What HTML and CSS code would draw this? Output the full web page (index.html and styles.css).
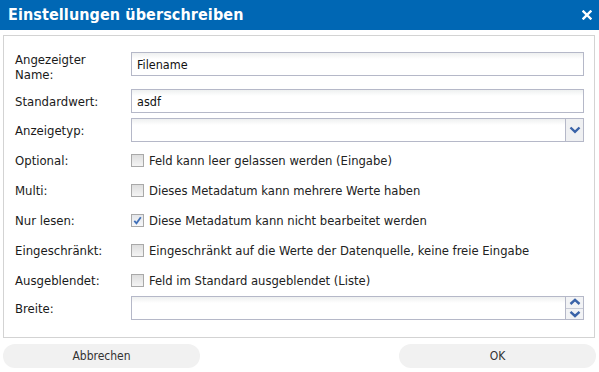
FILE: index.html
```html
<!DOCTYPE html>
<html lang="de">
<head>
<meta charset="utf-8">
<title>Einstellungen überschreiben</title>
<link rel="stylesheet" href="styles.css">
</head>
<body>
<div class="dialog">
  <div class="titlebar">
    <span class="title">Einstellungen überschreiben</span>
    <span class="close"><svg width="10" height="10" viewBox="0 0 10 10"><path d="M1.5 1.5 L8.5 8.5 M8.5 1.5 L1.5 8.5" stroke="#fff" stroke-width="2.4" stroke-linecap="square"/></svg></span>
  </div>
  <div class="panel">
    <div class="form">
      <div class="row row-name">
        <label class="lbl lbl-top">Angezeigter Name:</label>
        <div class="field"><span class="val">Filename</span></div>
      </div>
      <div class="row row-input">
        <label class="lbl">Standardwert:</label>
        <div class="field"><span class="val">asdf</span></div>
      </div>
      <div class="row row-input">
        <label class="lbl">Anzeigetyp:</label>
        <div class="field combo"><span class="val"></span>
          <span class="trigger"><svg width="12" height="8" viewBox="0 0 12 8"><path d="M1.5 1.5 L6 5.8 L10.5 1.5" stroke="#3a63a8" stroke-width="2.4" fill="none"/></svg></span>
        </div>
      </div>
      <div class="checks">
        <div class="row row-check">
          <label class="lbl">Optional:</label>
          <div class="check"><span class="box"></span><span class="ctext">Feld kann leer gelassen werden (Eingabe)</span></div>
        </div>
        <div class="row row-check">
          <label class="lbl">Multi:</label>
          <div class="check"><span class="box"></span><span class="ctext">Dieses Metadatum kann mehrere Werte haben</span></div>
        </div>
        <div class="row row-check">
          <label class="lbl">Nur lesen:</label>
          <div class="check"><span class="box checked"><svg width="11" height="11" viewBox="0 0 11 11"><path d="M2.3 5.8 L4.5 8.3 L8.8 2.2" stroke="#3f6fb8" stroke-width="1.8" fill="none"/></svg></span><span class="ctext">Diese Metadatum kann nicht bearbeitet werden</span></div>
        </div>
        <div class="row row-check">
          <label class="lbl">Eingeschränkt:</label>
          <div class="check"><span class="box"></span><span class="ctext">Eingeschränkt auf die Werte der Datenquelle, keine freie Eingabe</span></div>
        </div>
        <div class="row row-check">
          <label class="lbl">Ausgeblendet:</label>
          <div class="check"><span class="box"></span><span class="ctext">Feld im Standard ausgeblendet (Liste)</span></div>
        </div>
      </div>
      <div class="row row-input row-breite">
        <label class="lbl">Breite:</label>
        <div class="field combo"><span class="val"></span>
          <span class="spinner">
            <span class="spin"><svg width="12" height="8" viewBox="0 0 12 8"><path d="M1.5 6 L6 1.8 L10.5 6" stroke="#3a63a8" stroke-width="2.4" fill="none"/></svg></span>
            <span class="spin"><svg width="12" height="8" viewBox="0 0 12 8"><path d="M1.5 1.8 L6 6 L10.5 1.8" stroke="#3a63a8" stroke-width="2.4" fill="none"/></svg></span>
          </span>
        </div>
      </div>
    </div>
  </div>
  <div class="footer">
    <button class="btn">Abbrechen</button>
    <button class="btn">OK</button>
  </div>
</div>
</body>
</html>
```
FILE: styles.css
```css
html, body {
  margin: 0;
  padding: 0;
  background: #fff;
}
body {
  font-family: "DejaVu Sans Condensed", "DejaVu Sans", sans-serif;
  font-size: 13px;
  color: #222;
}
.dialog {
  width: 599px;
}
.titlebar {
  height: 30px;
  background: #0067b4;
  display: flex;
  align-items: center;
  justify-content: space-between;
  padding: 0 7px 0 8px;
  box-sizing: border-box;
}
.title {
  color: #fff;
  font-weight: bold;
  font-size: 16px;
  letter-spacing: 0.1px;
  margin-top: -1px;
}
.close {
  display: flex;
  width: 10px;
  height: 10px;
}
.panel {
  margin: 5px 4px 0 3px;
  border: 1px solid #d3d3d3;
  padding: 16px 10px 17px 11px;
}
.form {
  display: flex;
  flex-direction: column;
}
.row {
  display: grid;
  grid-template-columns: 116px 1fr;
  align-items: center;
}
.row-name {
  height: 32px;
  align-items: start;
  margin-bottom: 5px;
}
.row-input {
  height: 24px;
  margin-bottom: 5px;
}
.row-breite {
  margin-top: 1px;
  margin-bottom: 0;
}
.checks {
  margin-top: -2px;
  display: flex;
  flex-direction: column;
}
.row-check {
  height: 30px;
}
.lbl {
  line-height: 15px;
  color: #1a1a1a;
}
.lbl-top {
  width: 95px;
}
.field {
  height: 24px;
  box-sizing: border-box;
  border: 1px solid #b5b8c8;
  background: linear-gradient(#eef0f0 0, #fff 6px, #fff 100%);
  display: flex;
  align-items: center;
  padding-left: 5px;
  position: relative;
}
.val {
  flex: 1;
  font-size: 12.5px;
  color: #111;
}
.combo {
  padding-right: 0;
}
.trigger {
  width: 17px;
  height: 22px;
  border-left: 1px solid #b5b8c8;
  background: #eff0f2;
  display: flex;
  align-items: center;
  justify-content: center;
}
.spinner {
  width: 17px;
  height: 22px;
  border-left: 1px solid #b5b8c8;
  display: flex;
  flex-direction: column;
  background: #f2f3f5;
}
.spin {
  flex: 1;
  display: flex;
  align-items: center;
  justify-content: center;
}
.spin + .spin {
  border-top: 1px solid #c7cad6;
}
.check {
  display: flex;
  align-items: center;
}
.box {
  width: 13px;
  height: 13px;
  box-sizing: border-box;
  border: 1px solid #a9a9a9;
  background: linear-gradient(#dedede, #f4f4f4);
  margin-right: 5px;
  display: flex;
  align-items: center;
  justify-content: center;
}
.box.checked {
  background: linear-gradient(#e4e6ea, #f6f7f9);
}
.ctext {
  color: #222;
  font-size: 12.9px;
}
.footer {
  display: flex;
  justify-content: space-between;
  padding: 0 3px;
  margin-top: 6px;
}
.btn {
  width: 197px;
  height: 24px;
  border: none;
  border-radius: 12px;
  background: #f1f1f1;
  font-family: "DejaVu Sans Condensed", "DejaVu Sans", sans-serif;
  font-size: 12px;
  color: #333;
  padding: 0;
}
```
